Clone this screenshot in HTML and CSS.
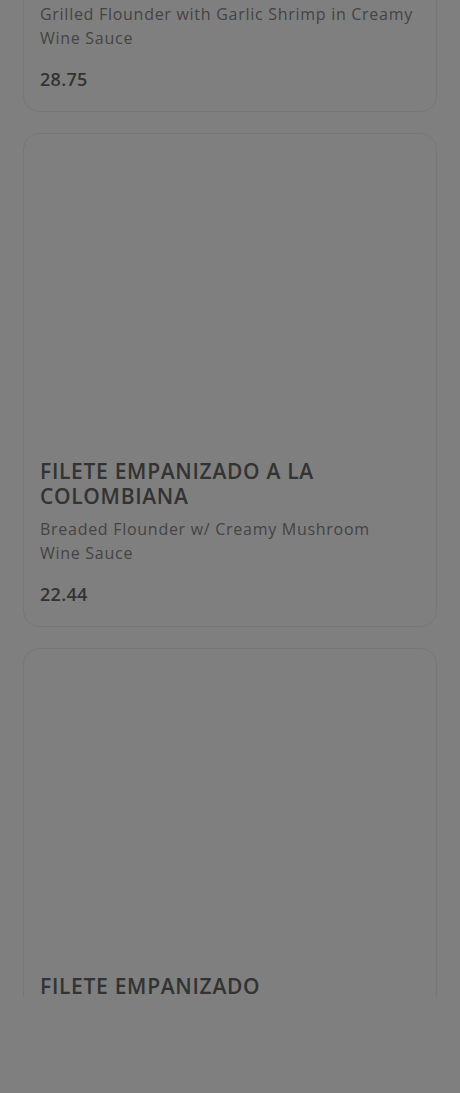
FILE: index.html
```html
<!DOCTYPE html>
<html lang="en">
<head>
<meta charset="utf-8">
<title>Menu</title>
<link rel="stylesheet" href="styles.css">
</head>
<body>
<div class="viewport">
  <div class="menu-list">
    <article class="card">
      <div class="card-media"></div>
      <h3 class="card-title">FILETE A LA MARINERA</h3>
      <p class="card-desc">Grilled Flounder with Garlic Shrimp in Creamy Wine&nbsp;Sauce</p>
      <div class="card-price">28.75</div>
    </article>
    <article class="card">
      <div class="card-media"></div>
      <h3 class="card-title">FILETE EMPANIZADO A LA COLOMBIANA</h3>
      <p class="card-desc">Breaded Flounder w/ Creamy Mushroom Wine&nbsp;Sauce</p>
      <div class="card-price">22.44</div>
    </article>
    <article class="card">
      <div class="card-media"></div>
      <h3 class="card-title">FILETE EMPANIZADO</h3>
      <p class="card-desc">Breaded Flounder</p>
      <div class="card-price">19.95</div>
    </article>
  </div>
</div>
<div class="backdrop"></div>
</body>
</html>
```
FILE: styles.css
```css
html, body {
  margin: 0;
  padding: 0;
  background: #ffffff;
}
body {
  font-family: "Open Sans", "Liberation Sans", sans-serif;
  height: 1093px;
  overflow: hidden;
}
.viewport {
  height: 997px;
  overflow: hidden;
}
.menu-list {
  margin-top: -357px;
  padding: 0 23px;
  display: flex;
  flex-direction: column;
  gap: 21px;
}
.card {
  border: 1px solid #eeeeee;
  border-radius: 16px;
  padding: 0 18px 20px 16px;
  background: #ffffff;
  display: flex;
  flex-direction: column;
}
.card-media {
  height: 325px;
}
.card-title {
  margin: 0;
  font-size: 21px;
  line-height: 25px;
  font-weight: 600;
  color: #666666;
  letter-spacing: 0.7px;
}
.card-desc {
  margin: 8px 0 0;
  font-size: 16px;
  line-height: 24px;
  color: #888888;
  letter-spacing: 0.72px;
}
.card-price {
  margin-top: 17px;
  font-size: 18px;
  line-height: 24px;
  font-weight: 600;
  color: #666666;
  letter-spacing: 0.3px;
}
.backdrop {
  position: fixed;
  inset: 0;
  background: rgba(0, 0, 0, 0.5);
}
```
